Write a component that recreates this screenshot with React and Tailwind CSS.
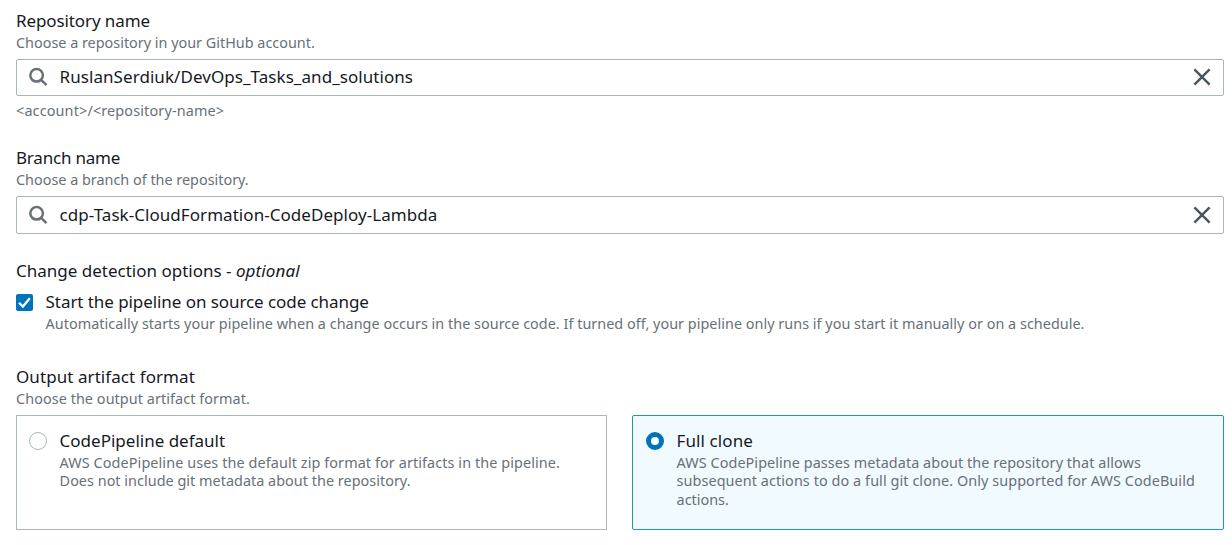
const label = "h-[22px] text-[17px] leading-[22px] text-[#16191f] whitespace-nowrap";
const small = "text-[14.4px] text-[#687078] whitespace-nowrap";
const hint = `mt-[2px] h-[18px] leading-[18px] ${small}`;

function SearchIcon() {
  return (
    <svg className="h-5 w-5 shrink-0" viewBox="0 0 20 20" fill="none" stroke="#687078" strokeWidth="2.5">
      <circle cx="8.6" cy="8.3" r="6.3" />
      <path d="M13.1 12.8 18.5 18.2" />
    </svg>
  );
}

function CloseIcon() {
  return (
    <svg className="h-[18px] w-[18px] shrink-0" viewBox="0 0 18 18" fill="none" stroke="#4b535b" strokeWidth="2.4">
      <path d="M1.4 1.4 16.6 16.6M16.6 1.4 1.4 16.6" />
    </svg>
  );
}

function SearchField({ className, children }) {
  return (
    <div className={`mt-[7px] flex items-center rounded-[2px] border border-[#aab7b8] bg-white pl-[11px] pr-[12px] text-[17px] text-[#16191f] ${className}`}>
      <SearchIcon />
      <div className="ml-[11.6px] flex-1 leading-[22px] whitespace-nowrap">{children}</div>
      <CloseIcon />
    </div>
  );
}

export default function App() {
  return (
    <main className="h-[545px] w-[1232px] overflow-hidden bg-white pl-[16px] pr-[8px] pt-[10px] font-['Noto_Sans',sans-serif]">
      <section>
        <div className={label}><span className="tracking-[-0.1px]">Repository name</span></div>
        <div className={hint}><span>Choose a repository in your GitHub account.</span></div>
        <SearchField className="h-[37px] pb-px"><span className="tracking-[0.06px]">RuslanSerdiuk/DevOps_Tasks_and_solutions</span></SearchField>
        <div className={`mt-[6px] h-[18px] leading-[18px] ${small}`}><span className="tracking-[0.15px]">&lt;account&gt;/&lt;repository-name&gt;</span></div>
      </section>

      <section className="mt-[27px]">
        <div className={label}><span className="tracking-[-0.2px]">Branch name</span></div>
        <div className={hint}><span>Choose a branch of the repository.</span></div>
        <SearchField className="h-[38px]"><span className="tracking-[0.05px]">cdp-Task-CloudFormation-CodeDeploy-Lambda</span></SearchField>
      </section>

      <section className="mt-[26px]">
        <div className={label}><span>Change detection options - </span><em className="tracking-[0.1px]">optional</em></div>
        <div className="mt-[9px] flex">
          <div className="mt-[3px] flex h-[17px] w-[17px] items-center justify-center rounded-[2px] bg-[#0073bb]">
            <svg className="h-[17px] w-[17px]" viewBox="0 0 17 17" fill="none" stroke="white" strokeWidth="2.3">
              <path d="M3 8.7 6.9 12.5 13.8 4.2" />
            </svg>
          </div>
          <div className="ml-[12.6px]">
            <div className={label}><span className="tracking-[-0.07px]">Start the pipeline on source code change</span></div>
            <div className={hint}><span className="tracking-[0.028px]">Automatically starts your pipeline when a change occurs in the source code. If turned off, your pipeline only runs if you start it manually or on a schedule.</span></div>
          </div>
        </div>
      </section>

      <section className="mt-[33px]">
        <div className={label}><span className="tracking-[0.07px]">Output artifact format</span></div>
        <div className={hint}><span className="tracking-[0.07px]">Choose the output artifact format.</span></div>
        <div className="mt-[7px] flex h-[115px] gap-[25px]">
          <div className="flex w-[591px] border border-[#aab7b8] pl-[12px] pt-[14px]">
            <div className="mt-[2px] h-[18px] w-[18px] rounded-full border border-[#aab7b8]" />
            <div className="ml-[12.6px]">
              <div className={label}><span>CodePipeline default</span></div>
              <div className={hint}><span className="tracking-[0.095px]">AWS CodePipeline uses the default zip format for artifacts in the pipeline.</span></div>
              <div className={`h-[18px] leading-[18px] ${small}`}><span className="tracking-[0.03px]">Does not include git metadata about the repository.</span></div>
            </div>
          </div>
          <div className="flex flex-1 rounded-[2px] border border-[#1f98a8] bg-[#f1faff] pl-[13px] pt-[14px]">
            <div className="mt-[2px] h-[18px] w-[18px] rounded-full border-[5px] border-[#0073bb] bg-white" />
            <div className="ml-[12.6px]">
              <div className={label}><span className="tracking-[0.1px]">Full clone</span></div>
              <div className={hint}><span className="tracking-[0.07px]">AWS CodePipeline passes metadata about the repository that allows</span></div>
              <div className={`h-[18px] leading-[18px] ${small}`}><span className="tracking-[0.085px]">subsequent actions to do a full git clone. Only supported for AWS CodeBuild</span></div>
              <div className={`h-[19px] leading-[19px] ${small}`}><span>actions.</span></div>
            </div>
          </div>
        </div>
      </section>
    </main>
  );
}
